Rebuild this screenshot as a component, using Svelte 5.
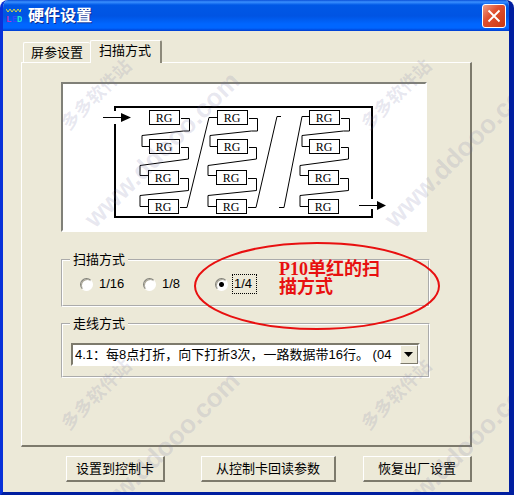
<script lang="ts">
	const tabs = ['屏参设置', '扫描方式'];
	const scanModes = ['1/16', '1/8', '1/4'];
	const columns = [0, 68, 160];
	const modules = [
		{ x: 149, y: 110 },
		{ x: 149, y: 139 },
		{ x: 148, y: 170 },
		{ x: 148, y: 199 }
	];
	const watermarks = [
		{ x: 0, y: 0 },
		{ x: 300, y: 0 },
		{ x: 0, y: 300 },
		{ x: 300, y: 300 }
	];

	let activeTab = $state('扫描方式');
	let scanMode = $state('1/4');
	let wiring = $state('4.1');
</script>

<div class="window">
	<header class="title-bar">
		<svg class="app-icon" viewBox="0 0 16 16" aria-hidden="true">
			<path d="M0 1l2 3 2-3 2 3 2-3 2 3 2-3 2 3 1-3" fill="none" stroke="#d8d840" />
			<text x="0" y="14" fill="#c030b8">L</text>
			<text x="6" y="14" fill="#3048ff">E</text>
			<text x="11" y="14" fill="#20e8d0">D</text>
		</svg>
		<h1>硬件设置</h1>
		<button type="button" class="close" aria-label="关闭">
			<svg viewBox="0 0 24 24"><path d="M6 6l12 12M18 6L6 18" /></svg>
		</button>
	</header>

	<main>
		<div class="tabs" role="tablist">
			{#each tabs as tab}
				<button
					type="button"
					role="tab"
					class="tab"
					class:active={activeTab === tab}
					aria-selected={activeTab === tab}
					onclick={() => (activeTab = tab)}
				>
					{tab}
				</button>
			{/each}
		</div>

		<section class="panel">
			<div class="diagram">
				<svg viewBox="63 84 362 146">
					<g class="frame">
						<path d="M115 111v-4h257v92M372 209v8H115v-93" />
					</g>
					<g class="wire">
						<path d="M103 117.5h20M359 205.5h20" />
						{#each columns as dx}
							<g transform="translate({dx} 0)">
								<path d="M181 118.5h8.5V131h-6L142 135.5v11h7" />
								<path d="M181 147.5h7.5V159L140 165.5v10h8" />
								<path d="M180 178.5h8.5v12L140 195.5v11h8" />
							</g>
						{/each}
						<path d="M180 207.5h7L209 117.5h8" />
						<path d="M248 207.5h8L277 116.5h4" />
						<path d="M279 207.5h5L302 116.5h8" />
					</g>
					<path d="M121 113l10 4.500-10 4.500zM377 201l9 4.500-9 4.500z" />
					{#each columns as dx}
						{#each modules as module}
							<rect class="module" x={module.x + dx + 0.5} y={module.y + 0.5} width="30" height="14" />
							<text class="module-name" x={module.x + dx + 15} y={module.y + 12}>RG</text>
						{/each}
					{/each}
				</svg>
			</div>

			<fieldset class="scan">
				<legend>扫描方式</legend>
				<div class="radios">
					{#each scanModes as mode}
						<label>
							<input type="radio" name="scan" value={mode} bind:group={scanMode} />
							<span class:focused={scanMode === mode}>{mode}</span>
						</label>
					{/each}
				</div>
				<div class="note">
					<svg viewBox="0 0 248 90" aria-hidden="true">
						<ellipse cx="124" cy="45" rx="122" ry="43" />
					</svg>
					<p>P10单红的扫描方式</p>
				</div>
			</fieldset>

			<fieldset class="wiring">
				<legend>走线方式</legend>
				<div class="combo">
					<select aria-label="走线方式" bind:value={wiring}>
						<option value="4.1">4.1：每8点打折，向下打折3次，一路数据带16行。 (04</option>
					</select>
					<svg class="arrow" viewBox="0 0 16 17" aria-hidden="true">
						<path d="M3 6h9l-4.500 5z" />
					</svg>
				</div>
			</fieldset>
		</section>

		<footer>
			<button type="button">设置到控制卡</button>
			<button type="button">从控制卡回读参数</button>
			<button type="button">恢复出厂设置</button>
		</footer>
	</main>

	<svg class="watermark" aria-hidden="true">
		{#each watermarks as mark}
			<g transform="translate({mark.x} {mark.y})">
				<text class="site" transform="translate(66 131) rotate(-45)">多多软件站</text>
				<text class="url" transform="translate(92 229) rotate(-45)">www.ddooo.com</text>
			</g>
		{/each}
	</svg>
</div>

<style>
	:global(body) {
		margin: 0;
		background: #fff;
	}

	.window {
		position: relative;
		overflow: hidden;
		box-sizing: border-box;
		border: solid #0831d9;
		border-width: 0 5px 4px 3px;
		border-right-color: #001ea0;
		border-bottom-color: #001ea0;
		border-radius: 8px 8px 0 0;
		background: #ece9d8;
		color: #000;
		font: 13px/16px 'Liberation Sans', 'Noto Sans CJK SC', sans-serif;
	}

	button,
	select {
		font: inherit;
		color: inherit;
		border-radius: 0;
	}

	.title-bar {
		display: flex;
		align-items: center;
		gap: 6px;
		height: 31px;
		box-sizing: border-box;
		padding: 0 3px;
		background: linear-gradient(#0a4fd8 0, #3a90ff 2px, #0058e6 5px, #0054e3 16px, #0066ff 24px, #0066ff 28px, #003dd0 31px);
	}

	.app-icon {
		width: 16px;
		height: 16px;
		font: bold 9px 'Liberation Mono', monospace;
	}

	h1 {
		flex: 1;
		margin: 0;
		color: #fff;
		font-size: 16px;
		line-height: 20px;
		text-shadow: 1px 1px #0a2a90;
	}

	.close {
		width: 24px;
		height: 24px;
		padding: 0;
		border: 1px solid #fff;
		border-radius: 3px;
		background: linear-gradient(135deg, #f0a088, #e05030 40%, #c83810);
	}

	.close svg {
		display: block;
		fill: none;
		stroke: #fff;
		stroke-width: 2;
	}

	main {
		padding: 9px 37px 10px 18px;
	}

	.tabs {
		display: flex;
		align-items: flex-end;
		padding-left: 2px;
	}

	.tab {
		height: 20px;
		padding: 0 7px;
		border: 1px solid #fff;
		border-width: 1px 0 0 1px;
		border-radius: 2px 2px 0 0;
		background: #ece9d8;
	}

	.tab.active {
		position: relative;
		height: 23px;
		margin-bottom: -1px;
		padding: 0 9px 3px 8px;
		border-right: 2px solid #8c897a;
	}

	.panel {
		padding: 19px 40px 67px 39px;
		border: 1px solid #fff;
		border-right: 2px solid #7d7a6c;
		border-bottom: 2px solid #7d7a6c;
	}

	.diagram {
		margin: 0 3px 20px 0;
		border: 2px solid #808078;
		border-right-color: #fff;
		border-bottom-color: #fff;
		background: #fff;
	}

	.diagram svg {
		display: block;
		width: 100%;
	}

	.frame {
		fill: none;
		stroke: #000;
		stroke-width: 2;
	}

	.wire {
		fill: none;
		stroke: #000;
	}

	.module {
		fill: #fff;
		stroke: #000;
	}

	.module-name {
		font: 12px 'Liberation Serif', serif;
		text-anchor: middle;
	}

	fieldset {
		position: relative;
		min-width: 0;
		margin: 0;
		border: 2px groove #fff;
	}

	legend {
		margin-left: 7px;
		padding: 0 3px;
	}

	.scan {
		margin-bottom: 9px;
		padding: 6px 0 11px;
	}

	.radios {
		display: grid;
		grid-template-columns: 63px 72px auto;
		padding: 0 17px;
	}

	.radios label {
		display: flex;
		align-items: center;
		gap: 4px;
	}

	.radios span {
		padding: 1px;
		border: 1px solid transparent;
	}

	.radios .focused {
		padding-right: 4px;
		border: 1px dotted #000;
	}

	input {
		appearance: none;
		width: 13px;
		height: 13px;
		margin: 0;
		border: 1px solid #808078;
		border-right-color: #fff;
		border-bottom-color: #fff;
		border-radius: 50%;
		background: #fff;
		box-shadow: inset 1px 1px 0 #aca899;
	}

	input:checked {
		background: radial-gradient(circle, #000 2px, #fff 3px);
	}

	.note {
		position: absolute;
		z-index: 1;
		top: -27px;
		left: 130px;
		width: 248px;
		pointer-events: none;
	}

	.note svg {
		display: block;
		fill: none;
		stroke: #e81010;
		stroke-width: 2;
	}

	.note p {
		position: absolute;
		top: 19px;
		left: 86px;
		width: 104px;
		margin: 0;
		color: #e81010;
		font: bold 18px/18px 'Liberation Serif', 'Noto Sans CJK SC', serif;
	}

	.wiring {
		padding: 11px 0 10px;
	}

	.combo {
		display: grid;
		grid-template-columns: 1fr 18px;
		margin: 0 8px;
		border: 2px solid #7d7a6c;
		border-right-color: #fff;
		border-bottom-color: #fff;
		background: #fff;
	}

	select {
		grid-area: 1 / 1 / 2 / 3;
		appearance: none;
		min-width: 0;
		height: 19px;
		padding: 0 18px 0 2px;
		border: 0;
		background: #fff;
	}

	.arrow {
		grid-area: 1 / 2;
		box-sizing: border-box;
		width: 18px;
		height: 19px;
		border: 1px solid #fff;
		border-right-color: #7d7a6c;
		border-bottom-color: #7d7a6c;
		background: #ece9d8;
		pointer-events: none;
	}

	footer {
		display: flex;
		justify-content: flex-end;
		gap: 27px;
		padding: 9px 0 0 45px;
	}

	footer button {
		height: 26px;
		padding: 0 14px;
		border: 1px solid #fff;
		border-right: 2px solid #7d7a6c;
		border-bottom: 2px solid #7d7a6c;
		background: #ece9d8;
	}

	footer button:first-child {
		margin-right: auto;
		padding: 0 9px;
	}

	.watermark {
		position: absolute;
		inset: 0;
		width: 100%;
		height: 100%;
		fill: #7070a0;
		fill-opacity: 0.17;
		pointer-events: none;
	}

	.site {
		font: bold 18px 'Noto Sans CJK SC', sans-serif;
	}

	.url {
		font: bold 26px 'Liberation Sans', sans-serif;
	}
</style>
